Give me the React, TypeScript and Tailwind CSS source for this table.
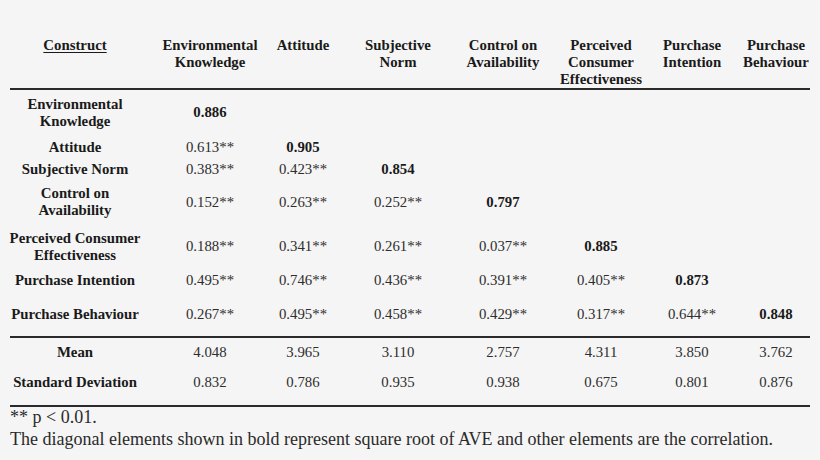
import React from "react";

const cols = "grid grid-cols-[150px_120px_66px_124px_86px_110px_72px_96px]";

type Row = { label: string[]; h: string; vals: string[]; diag: number };

const rows: Row[] = [
  { label: ["Environmental", "Knowledge"], h: "h-[45px]", vals: ["0.886"], diag: 0 },
  { label: ["Attitude"], h: "h-[24px]", vals: ["0.613**", "0.905"], diag: 1 },
  { label: ["Subjective Norm"], h: "h-[20px]", vals: ["0.383**", "0.423**", "0.854"], diag: 2 },
  { label: ["Control on", "Availability"], h: "h-[46px]", vals: ["0.152**", "0.263**", "0.252**", "0.797"], diag: 3 },
  { label: ["Perceived Consumer", "Effectiveness"], h: "h-[43px]", vals: ["0.188**", "0.341**", "0.261**", "0.037**", "0.885"], diag: 4 },
  { label: ["Purchase Intention"], h: "h-[25px]", vals: ["0.495**", "0.746**", "0.436**", "0.391**", "0.405**", "0.873"], diag: 5 },
  { label: ["Purchase Behaviour"], h: "h-[43px]", vals: ["0.267**", "0.495**", "0.458**", "0.429**", "0.317**", "0.644**", "0.848"], diag: 6 },
];

const headers: string[][] = [
  ["Environmental", "Knowledge"],
  ["Attitude"],
  ["Subjective", "Norm"],
  ["Control on", "Availability"],
  ["Perceived", "Consumer", "Effectiveness"],
  ["Purchase", "Intention"],
  ["Purchase", "Behaviour"],
];

const Cell = ({ children, bold }: { children: React.ReactNode; bold?: boolean }) => (
  <div className={`flex flex-col items-center justify-center whitespace-nowrap ${bold ? "font-bold text-[#1a1a1a]" : "text-[#2e2e2e]"}`}>
    {children}
  </div>
);

const Line = () => <div className="ml-[10px] w-[800px] h-[2px] bg-[#2a2a2a]" />;

export default function App() {
  return (
    <div className="w-[820px] h-[460px] overflow-hidden bg-[#f5f5f5] font-['Liberation_Serif',_'Times_New_Roman',_serif] text-[14.8px] leading-[17px]">
      <div className="pt-[37px]">
        <div className={`${cols} h-[51px] items-start`}>
          <div className="flex justify-center font-bold text-[#1a1a1a]">
            <span className="underline underline-offset-2 decoration-1">Construct</span>
          </div>
          {headers.map((h, i) => (
            <div key={i} className="flex flex-col items-center whitespace-nowrap font-bold text-[#1a1a1a]">
              {h.map((l, j) => (
                <span key={j}>{l}</span>
              ))}
            </div>
          ))}
        </div>
        <Line />
        {rows.map((r, i) => (
          <div key={i} className={`${cols} ${r.h} items-center`}>
            <Cell bold>
              {r.label.map((l, j) => (
                <span key={j}>{l}</span>
              ))}
            </Cell>
            {r.vals.map((v, j) => (
              <Cell key={j} bold={j === r.diag}>
                {v}
              </Cell>
            ))}
          </div>
        ))}
        <Line />
        <div className={`${cols} h-[28px] items-center`}>
          <Cell bold>Mean</Cell>
          {["4.048", "3.965", "3.110", "2.757", "4.311", "3.850", "3.762"].map((v, j) => (
            <Cell key={j}>{v}</Cell>
          ))}
        </div>
        <div className={`${cols} h-[32px] items-center`}>
          <Cell bold>Standard Deviation</Cell>
          {["0.832", "0.786", "0.935", "0.938", "0.675", "0.801", "0.876"].map((v, j) => (
            <Cell key={j}>{v}</Cell>
          ))}
        </div>
        <div className="h-[7px]" />
        <Line />
        <div className="pl-[10px] text-[18px] leading-[20px] text-[#2a2a2a]">
          <p>** p &lt; 0.01.</p>
          <p className="mt-[2px] whitespace-nowrap">
            The diagonal elements shown in bold represent square root of AVE and other elements are the correlation.
          </p>
        </div>
      </div>
    </div>
  );
}
